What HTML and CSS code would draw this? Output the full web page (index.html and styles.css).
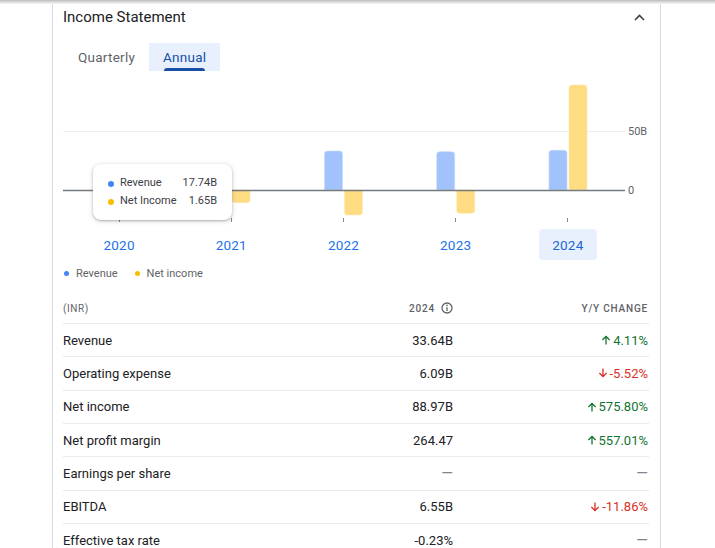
FILE: index.html
```html
<!DOCTYPE html>
<html>
<head>
<meta charset="utf-8">
<link rel="stylesheet" href="styles.css">
</head>
<body>
<div class="topbar"></div>
<div class="card">
  <div class="header">
    <div class="title">Income Statement</div>
    <svg class="chev" width="11" height="7" viewBox="0 0 11 7"><polyline points="1,6 5.5,1.5 10,6" fill="none" stroke="#3c4043" stroke-width="1.6"/></svg>
  </div>
  <div class="tabs">
    <div class="tab">Quarterly</div>
    <div class="tab active">Annual</div>
  </div>
  <div class="chart">
    <svg class="plot" width="585" height="150" viewBox="0 0 585 150">
      <line x1="0" y1="56.5" x2="562" y2="56.5" stroke="#eceef0" stroke-width="1"/>
      <path d="M37,115 V97 Q37,94 40,94 H52 Q55,94 55,97 V115 Z" class="rev"/>
      <path d="M57,115 V113 H75 V115 Z" class="net"/>
      <path d="M149,115 V99 Q149,96 152,96 H164 Q167,96 167,99 V115 Z" class="rev"/>
      <path d="M169,115 V124.7 Q169,127.7 172,127.7 H184 Q187,127.7 187,124.7 V115 Z" class="net"/>
      <path d="M261.5,115 V79 Q261.5,76 264.5,76 H276.5 Q279.5,76 279.5,79 V115 Z" class="rev"/>
      <path d="M281.5,115 V137 Q281.5,140 284.5,140 H296.5 Q299.5,140 299.5,137 V115 Z" class="net"/>
      <path d="M373.7,115 V79.7 Q373.7,76.7 376.7,76.7 H388.7 Q391.7,76.7 391.7,79.7 V115 Z" class="rev"/>
      <path d="M393.7,115 V135.3 Q393.7,138.3 396.7,138.3 H408.7 Q411.7,138.3 411.7,135.3 V115 Z" class="net"/>
      <path d="M486,115 V78.3 Q486,75.3 489,75.3 H501 Q504,75.3 504,78.3 V115 Z" class="rev"/>
      <path d="M506,115 V13 Q506,10 509,10 H521 Q524,10 524,13 V115 Z" class="net"/>
      <line x1="0" y1="115.5" x2="562" y2="115.5" stroke="#757a7f" stroke-width="1.4"/>
      <g stroke="#80868b" stroke-width="1">
        <line x1="56.5" y1="143" x2="56.5" y2="147"/>
        <line x1="168.5" y1="143" x2="168.5" y2="147"/>
        <line x1="280.5" y1="143" x2="280.5" y2="147"/>
        <line x1="392.5" y1="143" x2="392.5" y2="147"/>
        <line x1="504.5" y1="143" x2="504.5" y2="147"/>
      </g>
      <text x="565" y="60" class="axis">50B</text>
      <text x="565" y="119" class="axis">0</text>
    </svg>
    <div class="tooltip">
      <span class="dot blue"></span><span class="tl">Revenue</span><span class="tv">17.74B</span>
      <span class="dot yellow"></span><span class="tl">Net Income</span><span class="tv">1.65B</span>
    </div>
    <div class="years">
      <div class="year"><span>2020</span></div>
      <div class="year"><span>2021</span></div>
      <div class="year"><span>2022</span></div>
      <div class="year"><span>2023</span></div>
      <div class="year sel"><span>2024</span></div>
    </div>
  </div>
  <div class="legend">
    <span class="ldot blue"></span><span class="ltext">Revenue</span>
    <span class="ldot yellow"></span><span class="ltext">Net income</span>
  </div>
  <div class="table">
    <div class="row head">
      <div class="c1">(INR)</div>
      <div class="c2">2024 <svg class="info" width="12" height="12" viewBox="0 0 12 12"><circle cx="6" cy="6" r="5" fill="none" stroke="#5f6368" stroke-width="1.3"/><line x1="6" y1="5.2" x2="6" y2="9" stroke="#5f6368" stroke-width="1.3"/><circle cx="6" cy="3.4" r="0.8" fill="#5f6368"/></svg></div>
      <div class="c3">Y/Y CHANGE</div>
    </div>
    <div class="row">
      <div class="c1">Revenue</div>
      <div class="c2">33.64B</div>
      <div class="c3 up"><svg class="arr" width="10" height="10" viewBox="0 0 10 10"><path d="M5 9.5V1.5M1.4 5L5 1.4L8.6 5" fill="none" stroke="currentColor" stroke-width="1.3"/></svg>4.11%</div>
    </div>
    <div class="row">
      <div class="c1">Operating expense</div>
      <div class="c2">6.09B</div>
      <div class="c3 down"><svg class="arr" width="10" height="10" viewBox="0 0 10 10"><path d="M5 0.5V8.5M1.4 5L5 8.6L8.6 5" fill="none" stroke="currentColor" stroke-width="1.3"/></svg>-5.52%</div>
    </div>
    <div class="row">
      <div class="c1">Net income</div>
      <div class="c2">88.97B</div>
      <div class="c3 up"><svg class="arr" width="10" height="10" viewBox="0 0 10 10"><path d="M5 9.5V1.5M1.4 5L5 1.4L8.6 5" fill="none" stroke="currentColor" stroke-width="1.3"/></svg>575.80%</div>
    </div>
    <div class="row">
      <div class="c1">Net profit margin</div>
      <div class="c2">264.47</div>
      <div class="c3 up"><svg class="arr" width="10" height="10" viewBox="0 0 10 10"><path d="M5 9.5V1.5M1.4 5L5 1.4L8.6 5" fill="none" stroke="currentColor" stroke-width="1.3"/></svg>557.01%</div>
    </div>
    <div class="row">
      <div class="c1">Earnings per share</div>
      <div class="c2 dash">—</div>
      <div class="c3 dash">—</div>
    </div>
    <div class="row">
      <div class="c1">EBITDA</div>
      <div class="c2">6.55B</div>
      <div class="c3 down"><svg class="arr" width="10" height="10" viewBox="0 0 10 10"><path d="M5 0.5V8.5M1.4 5L5 8.6L8.6 5" fill="none" stroke="currentColor" stroke-width="1.3"/></svg>-11.86%</div>
    </div>
    <div class="row">
      <div class="c1">Effective tax rate</div>
      <div class="c2">-0.23%</div>
      <div class="c3 dash">—</div>
    </div>
  </div>
</div>
</body>
</html>
```
FILE: styles.css
```css
* { box-sizing: border-box; }
html, body { margin: 0; padding: 0; background: #fff; }
body {
  font-family: Roboto, "Liberation Sans", Arial, sans-serif;
  color: #202124;
  width: 715px;
  height: 548px;
  overflow: hidden;
}
.topbar {
  height: 4px;
  background: linear-gradient(to bottom, #b9b9b9 0%, #d9d9d9 45%, #f6f6f6 100%);
}
.card {
  margin-left: 52px;
  width: 609px;
  border-left: 1px solid #dadce0;
  border-right: 1px solid #dadce0;
  padding: 0 11px 0 10px;
  height: 544px;
}
.header {
  height: 26px;
  display: flex;
  align-items: center;
  justify-content: space-between;
}
.title {
  font-size: 15px;
  color: #202124;
}
.chev { margin-right: 4px; }
.tabs {
  margin-top: 13px;
  display: flex;
  height: 28px;
}
.tab {
  position: relative;
  display: flex;
  align-items: center;
  padding: 0 14px;
  font-size: 13.5px;
  letter-spacing: 0.25px;
  color: #5f6368;
}
.tab:first-child { margin-left: 1px; }
.tab.active {
  background: #e8f0fe;
  color: #174ea6;
}
.tab.active::after {
  content: "";
  position: absolute;
  left: 15px;
  right: 15px;
  bottom: 0;
  height: 3px;
  border-radius: 3px 3px 0 0;
  background: #174ea6;
}
.chart {
  position: relative;
  margin-top: 4px;
}
.plot { display: block; }
.rev { fill: #a1c2fa; stroke: #c6dafc; stroke-width: 0.6; }
.net { fill: #fddc82; stroke: #feeab4; stroke-width: 0.6; }
.axis {
  font-family: Roboto, "Liberation Sans", Arial, sans-serif;
  font-size: 11px;
  fill: #5f6368;
}
.tooltip {
  position: absolute;
  left: 30px;
  top: 89px;
  background: #fff;
  border-radius: 8px;
  box-shadow: 0 1px 2px rgba(60,64,67,.3), 0 1px 4px 1px rgba(60,64,67,.15);
  padding: 10px 15px 10px 15px;
  display: grid;
  grid-template-columns: 6px auto auto;
  column-gap: 6px;
  align-items: center;
  font-size: 11px;
  line-height: 18px;
  color: #3c4043;
}
.tooltip .tv { justify-self: end; }
.dot {
  width: 6px;
  height: 6px;
  border-radius: 50%;
  margin-top: 2px;
}
.blue { background: #4285f4; }
.yellow { background: #fbbc04; }
.years {
  display: grid;
  grid-template-columns: repeat(5, 112.2px);
  height: 35px;
}
.year {
  display: flex;
  justify-content: center;
  padding-top: 4px;
}
.year span {
  width: 58px;
  height: 31px;
  display: flex;
  align-items: center;
  justify-content: center;
  font-size: 13.5px;
  letter-spacing: 0.2px;
  color: #1a73e8;
  border-radius: 4px;
}
.year.sel span {
  background: #e8f0fe;
  color: #1967d2;
}
.legend {
  margin-top: 5px;
  height: 16px;
  display: flex;
  align-items: center;
  font-size: 11px;
  color: #5f6368;
}
.ldot {
  width: 5px;
  height: 5px;
  border-radius: 50%;
  margin-left: 1px;
  margin-right: 7px;
}
.ltext { margin-right: 16px; }
.table { font-size: 13px; }
.row {
  display: grid;
  grid-template-columns: 290px 100px 195px;
  align-items: center;
  height: 33.33px;
  border-bottom: 1px solid #e8eaed;
}
.row.head {
  height: 43px;
  padding-top: 12px;
  font-size: 10px;
  color: #5f6368;
}
.row.head .c1 { letter-spacing: 0.6px; }
.row.head .c2, .row.head .c3 {
  font-weight: 500;
  letter-spacing: 0.8px;
}
.c2, .c3 {
  display: flex;
  align-items: center;
  justify-content: flex-end;
  text-align: right;
}
.info { margin-left: 6px; }
.up { color: #137333; }
.down { color: #d93025; }
.arr { margin-right: 2px; }
.dash { color: #80868b; font-size: 15px; }
```
